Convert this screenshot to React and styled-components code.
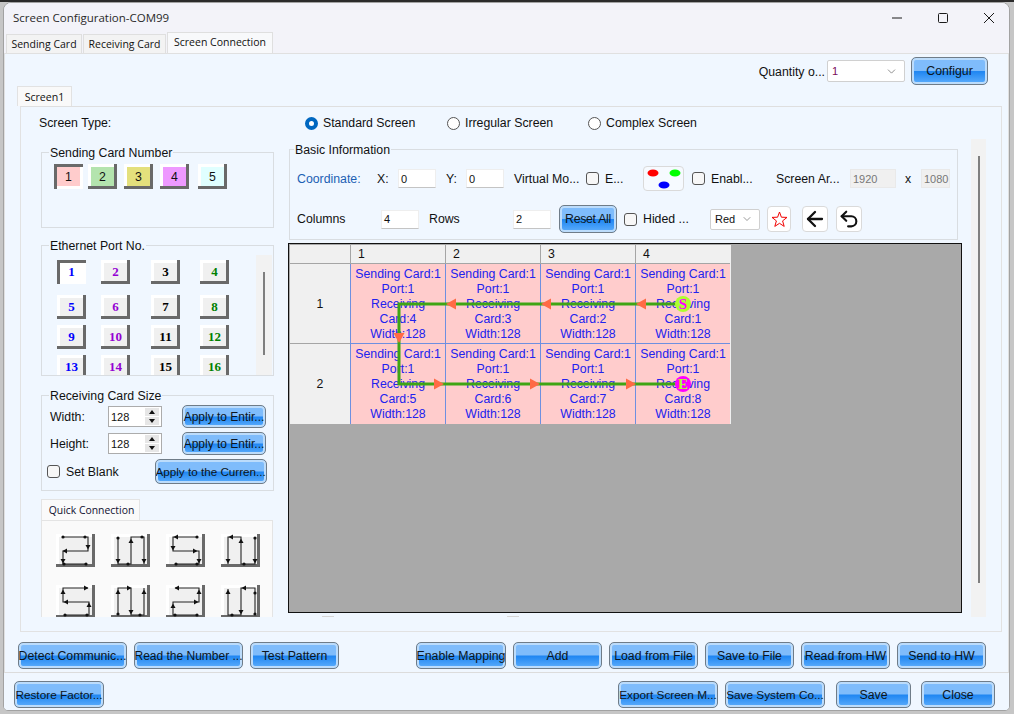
import React from "react";
import styled, { createGlobalStyle } from "styled-components";
import { ArrowLeft, ChevronDown, Undo2 } from "lucide-react";

const Global = createGlobalStyle`
  html, body { margin: 0; padding: 0; }
  body {
    width: 1014px; height: 714px; overflow: hidden;
    background: linear-gradient(#2b2b2b 2px, #c6c6c6 2px);
    font-family: "Liberation Sans", Arial, sans-serif;
    font-size: 12.3px; color: #111;
  }
  * { box-sizing: border-box; }
`;

const Window = styled.div`
  margin: 2px 0 0 3px; width: 1007px; height: 709px;
  display: flex; flex-direction: column;
  background: #f0f7ff; border: 1px solid #a2a2a2; border-radius: 8px 8px 5px 5px; overflow: hidden;
`;
const TitleBar = styled.div`
  height: 29px; flex: none; display: flex; align-items: center; padding-left: 9px; padding-right: 2px;
  background: #f3f3f9; font-family: "Open Sans", sans-serif; font-size: 11.5px; color: #2a2a2a;
`;
const TitleText = styled.span`flex: 1;`;
const WinButton = styled.svg`
  width: 46px; height: 12px; flex: none; fill: none; stroke: #1b1b1b; stroke-width: 1;
`;
const TabStrip = styled.div`
  height: 21px; flex: none; display: flex; align-items: flex-end; padding-left: 2px;
  background: #f3f3f9;
`;
const MainTab = styled.div`
  height: ${p => (p.$active ? 21 : 19)}px; width: ${p => p.$w}px; margin-right: 1px;
  display: flex; align-items: center; justify-content: center;
  font-size: 10.5px; font-family: "Open Sans", sans-serif;
  background: ${p => (p.$active ? "#f8f9fb" : "#f3f3f3")};
  border: 1px solid #dfdfdf; border-bottom: none;
  padding-bottom: ${p => (p.$active ? 3 : 0)}px;
`;
const Pane = styled.div`
  flex: 1; min-height: 0; padding: 3px 0 0 0;
  border: 1px solid #e0e0e0; border-bottom-color: #dcdcdc;
  display: flex; flex-direction: column; background: #f0f7ff;
`;
const TopRow = styled.div`
  height: 28px; flex: none; display: flex; align-items: center; justify-content: flex-end;
  padding-right: 20px;
`;
const QtyLabel = styled.span`margin: 2px 2px 0 0;`;
const SelectBox = styled.div`
  width: ${p => p.$w}px; height: ${p => p.$h}px; display: flex; align-items: center;
  justify-content: space-between; padding: 0 6px 0 4px; background: #fff;
  border: 1px solid #d0d0d0; border-radius: 2px; font-size: ${p => p.$fs || 11}px; color: ${p => p.$c || "#111"};
`;
const InnerTab = styled.div`
  width: 55px; height: 20px; margin: 1px 0 0 12px; flex: none; display: flex; align-items: center;
  justify-content: center; background: #f9f9f9; border: 1px solid #e2e2e2; border-bottom: none;
  font-size: 10.6px; font-family: "Open Sans", sans-serif;
`;
const InnerPane = styled.div`
  height: 526px; flex: none; margin: 0 6px 0 15px; border: 1px solid #e2e2e2; border-top-color: #dfdfdf;
`;
const TypeRow = styled.div`
  height: 32px; display: grid; grid-template-columns: 266px 142px 141px auto; align-items: center;
  padding-left: 18px;
`;
const RadioLabel = styled.label`display: flex; align-items: center; gap: 5px;`;
const Radio = styled.span`
  width: 13px; height: 13px; border-radius: 50%; background: #fff;
  border: ${p => (p.$on ? "4px solid #0067c0" : "1px solid #555")};
`;
const BodyRow = styled.div`height: 478px; display: flex; padding-left: 20px;`;
const LeftCol = styled.div`width: 233px; flex: none; padding-top: 13px;`;
const Group = styled.div`
  position: relative; height: ${p => p.$h}px; margin-top: ${p => p.$mt || 0}px;
  border: 1px solid #d9dde1;
`;
const Legend = styled.span`
  position: absolute; top: -7px; left: ${p => p.$l}px; padding: 0 1px; background: #f0f7ff;
  line-height: 14px; white-space: nowrap;
`;
const CardRow = styled.div`display: flex; padding: 11px 0 0 12px;`;
const Bevel = styled.div`
  flex: none; display: flex; align-items: center; justify-content: center; padding: 3px;
  width: ${p => p.$w || 29}px; height: ${p => p.$h || 25}px; margin-left: ${p => p.$ml || 0}px;
  background: ${p => p.$bg};
  box-shadow: ${p => (p.$in
    ? "inset 3px 3px 0 #696969, inset -3px -3px 0 #fff"
    : "inset -3px -3px 0 #696969, inset 3px 3px 0 #fff")};
`;
const PortView = styled.div`height: 129px; overflow: hidden; display: flex;`;
const PortGrid = styled.div`
  display: grid; grid-template-columns: 44px 50px 49px 29px; grid-template-rows: 24px 24px 24px 24px;
  row-gap: 0; padding: 14px 0 0 15px; width: 214px; flex: none; align-content: start;
  & > *:nth-child(n+5) { margin-top: 11px; }
  & > *:nth-child(n+9) { margin-top: 17px; }
  & > *:nth-child(n+13) { margin-top: 23px; }
`;
const PortNum = styled.span`
  font-family: "Liberation Serif", serif; font-weight: 700; font-size: 13px; color: ${p => p.$c};
`;
const ScrollTrack = styled.div`
  flex: none; width: ${p => p.$w}px; height: ${p => p.$h}px; margin: ${p => p.$m || 0};
  padding: ${p => p.$tp}px 0 0 ${p => p.$lp}px; background: #f2f2f2;
`;
const ScrollThumb = styled.div`width: 2px; height: ${p => p.$h}px; background: #7f7f7f;`;
const FormRow = styled.div`
  display: flex; align-items: center; padding-left: ${p => p.$pl}px; margin-top: ${p => p.$mt}px;
`;
const FormLabel = styled.span`width: 58px; flex: none;`;
const Spinner = styled.div`
  width: 54px; height: 21px; display: flex; align-items: center; justify-content: space-between;
  padding: 0 2px 0 2px; background: #fff; border: 1px solid #acacac; font-size: 11px;
`;
const SpinArrows = styled.div`display: flex; flex-direction: column; gap: 1px;`;
const SpinArrow = styled.div`
  width: 14px; height: 8px; background: #e6e6e6; display: flex; align-items: center; justify-content: center;
  &::before {
    content: ""; border-left: 3px solid transparent; border-right: 3px solid transparent;
    ${p => (p.$up ? "border-bottom: 4px solid #111;" : "border-top: 4px solid #111;")}
  }
`;
const Btn = styled.div`
  flex: none; width: ${p => p.$w}px; height: ${p => p.$h || 27}px; margin-left: ${p => p.$ml || 0}px;
  display: flex; align-items: center; justify-content: center; overflow: hidden; white-space: nowrap;
  border: 1px solid #6f7c88; border-radius: 5px; color: #0c1520;
  background: linear-gradient(#7fbcfb 0, #7fbcfb 48%, #1f86f2 52%, #5eaefc 100%);
  box-shadow: inset 0 0 0 2px #bcdcfb;
  font-size: ${p => p.$fs || 12.3}px; letter-spacing: ${p => p.$ls || 0}px;
`;
const Check = styled.span`
  width: 13px; height: 13px; flex: none; border: 1px solid #555; border-radius: 3px; background: #f7f7f7;
`;
const CheckText = styled.span`margin-left: 6px;`;
const QuickTab = styled.div`
  width: 99px; height: 21px; margin-top: 8px; display: flex; align-items: center; justify-content: center;
  background: #fafafa; border: 1px solid #e4e4e4; border-bottom: none; font-size: 10.4px;
  font-family: "Open Sans", sans-serif; color: #101030; padding-left: 2px;
`;
const QuickPane = styled.div`
  width: 232px; height: 97px; overflow: hidden; padding: 13px 0 0 14px; background: #fafafa;
  border: 1px solid #e4e4e4; border-bottom: none;
  display: grid; grid-template-columns: repeat(4, 39px); column-gap: 16px; row-gap: 18px; align-content: start;
`;
const QuickIcon = styled.div`
  width: 39px; height: 33px; background: #f0f0f0;
  box-shadow: inset -3px -3px 0 #696969, inset 3px 3px 0 #fff;
`;
const QuickSvg = styled.svg`display: block; width: 39px; height: 33px; overflow: visible;`;
const RightCol = styled.div`width: 674px; flex: none; margin-left: 14px; padding-top: 10px;`;
const BasicGroup = styled(Group)`margin-left: 1px; width: 669px; padding-top: 16px;`;
const BasicRow = styled.div`
  display: grid; grid-template-columns: ${p => p.$cols}; height: ${p => p.$h}px; margin-top: ${p => p.$mt || 0}px;
  align-items: center; padding-left: 7px; white-space: nowrap;
`;
const BlueLabel = styled.span`color: #1c5fb4;`;
const TextInput = styled.div`
  width: ${p => p.$w || 38}px; height: 19px; display: flex; align-items: center; padding-left: 2px; font-size: 11px;
  background: ${p => (p.$off ? "#f0f0f0" : "#fff")}; color: ${p => (p.$off ? "#777" : "#111")};
  border: 1px solid ${p => (p.$off ? "#e9e9e9" : "#eeeeee")}; border-bottom-color: ${p => (p.$off ? "#e9e9e9" : "#c4c4c4")};
`;
const IconBtn = styled.div`
  width: ${p => p.$w}px; height: ${p => p.$h}px; display: flex; align-items: center; justify-content: center;
  background: ${p => p.$bg || "#fff"}; border: 1px solid #dadada; border-radius: 4px;
`;
const ColorDots = styled.svg`width: 39px; height: 23px;`;
const StarIcon = styled.svg`width: 17px; height: 17px; fill: none; stroke: #f00000; stroke-width: 1;`;
const ScreenBox = styled.div`
  position: relative; width: 674px; height: 370px; margin-top: 3px;
  background: #a9a9a9; border: 1px solid #111; overflow: hidden;
`;
const ScreenGrid = styled.div`
  display: grid; width: 441px; margin-top: 1px; margin-left: 1px;
  grid-template-columns: 60px repeat(4, 95px); grid-template-rows: 19px 80px 80px; background: #f0f0f0;
`;
const HeadCell = styled.div`
  position: relative; padding: 1px 0 0 7px; line-height: 17px; background: #f0f0f0;
  border-bottom: 1px solid #a5a5a5; border-left: ${p => (p.$first ? "none" : "1px solid #a5a5a5")};
`;
const RowHead = styled.div`
  display: flex; align-items: center; justify-content: center; background: #f0f0f0;
  border-bottom: ${p => (p.$last ? "none" : "1px solid #a5a5a5")}; padding-right: 0;
`;
const Cell = styled.div`
  display: flex; flex-direction: column; align-items: center; padding-top: 3px; background: #ffcccc;
  color: #2222ee; line-height: 15px; font-size: 12.3px; white-space: nowrap;
  border-left: 1px solid #6e8fe0; border-bottom: ${p => (p.$last ? "none" : "1px solid #6e8fe0")};
`;
const PathLayer = styled.svg`position: absolute; left: 0; top: 0; width: 672px; height: 368px; pointer-events: none;`;
const Marker = styled.span`
  position: absolute; left: ${p => p.$x - 8}px; top: ${p => p.$y - 8}px; width: 16px; height: 16px; border-radius: 50%;
  display: flex; align-items: center; justify-content: center; background: ${p => p.$bg}; color: ${p => p.$c};
  font-family: "Liberation Serif", serif; font-weight: 700; font-size: 15px; line-height: 16px;
`;
const BumpRow = styled.div`display: flex; padding: 3px 0 0 34px;`;
const Bump = styled.div`width: 12px; height: 1px; background: #d6d6d6; margin-right: 173px;`;
const MainScroll = styled(ScrollTrack)``;
const ActionRow = styled.div`
  flex: none; display: flex; gap: 7px; margin-top: 10px; padding: 0 22px 0 13px;
`;
const Push = styled.div`flex: 1;`;
const Footer = styled.div`
  flex: none; height: 37px; display: flex; align-items: flex-start; padding: 8px 14px 0 10px; gap: 7px;
  background: #f0f7ff;
`;

const cardColors = [
  ["1", "#ffcccc", true, 0], ["2", "#b4e4ae", false, 5], ["3", "#e4e07c", false, 7],
  ["4", "#ee99ff", false, 7], ["5", "#e0ffff", false, 9],
];
const portColor = ["#0000ff", "#9400d3", "#000", "#008000"];

const a = (x, y, d) => {
  const pts = {
    d: `${x - 2.5},${y - 2} ${x + 2.5},${y - 2} ${x},${y + 2.5}`,
    u: `${x - 2.5},${y + 2} ${x + 2.5},${y + 2} ${x},${y - 2.5}`,
    l: `${x + 2},${y - 2.5} ${x + 2},${y + 2.5} ${x - 2.5},${y}`,
    r: `${x - 2},${y - 2.5} ${x - 2},${y + 2.5} ${x + 2.5},${y}`,
  };
  return pts[d];
};
const icons = [
  { p: "7,3 32,3 32,17 7,17 7,30 30,30", dots: [[7, 3], [29, 3], [8, 30], [30, 30]], arr: [[32, 13, "d"], [9, 17, "l"], [7, 27, "d"]] },
  { p: "7,4 7,30 20,30 20,3 33,3 33,30", dots: [[7, 4], [17, 30], [31, 3]], arr: [[7, 27, "d"], [20, 7, "u"], [33, 27, "d"]] },
  { p: "31,3 7,3 7,17 33,17 33,30 10,30", dots: [[31, 3], [31, 30], [10, 30]], arr: [[10, 3, "l"], [7, 14, "d"], [29, 17, "r"], [33, 27, "d"]] },
  { p: "34,4 34,30 20,30 20,3 7,3 7,30", dots: [[34, 4], [23, 30]], arr: [[34, 27, "d"], [20, 7, "u"], [10, 3, "l"], [7, 27, "d"]] },
  { p: "9,30 33,30 33,17 7,17 7,3 32,3", dots: [[9, 30], [31, 30]], arr: [[33, 20, "u"], [10, 17, "l"], [7, 7, "u"], [30, 3, "r"]] },
  { p: "7,29 7,3 20,3 20,30 33,30 33,3", dots: [[7, 29], [29, 30]], arr: [[7, 7, "u"], [18, 3, "r"], [20, 27, "d"], [33, 7, "u"]] },
  { p: "31,30 7,30 7,17 33,17 33,3 9,3", dots: [[31, 30], [9, 30]], arr: [[7, 21, "u"], [30, 17, "r"], [33, 7, "u"], [11, 3, "l"]] },
  { p: "34,30 34,3 20,3 20,30 7,30 7,4", dots: [[34, 8], [34, 29], [11, 30]], arr: [[7, 7, "u"], [20, 27, "d"], [23, 3, "l"]] },
];

const cardsRow1 = [4, 3, 2, 1];
const cardsRow2 = [5, 6, 7, 8];

function CardCell({ n, last }) {
  return (
    <Cell $last={last}>
      <span>Sending Card:1</span><span>Port:1</span><span>Receiving</span>
      <span>Card:{n}</span><span>Width:128</span>
    </Cell>
  );
}

export default function App() {
  return (
    <>
      <Global />
      <Window>
        <TitleBar>
          <TitleText>Screen Configuration-COM99</TitleText>
          <WinButton viewBox="0 0 46 12"><path d="M23 6h10" /></WinButton>
          <WinButton viewBox="0 0 46 12"><rect x="23.5" y="1.5" width="9" height="9" rx="1" /></WinButton>
          <WinButton viewBox="0 0 46 12"><path d="M23 1l10 10M33 1L23 11" /></WinButton>
        </TitleBar>
        <TabStrip>
          <MainTab $w={76}>Sending Card</MainTab>
          <MainTab $w={83}>Receiving Card</MainTab>
          <MainTab $w={106} $active>Screen Connection</MainTab>
        </TabStrip>
        <Pane>
          <TopRow>
            <QtyLabel>Quantity o...</QtyLabel>
            <SelectBox $w={78} $h={22} $c="#7a0a5a">1<ChevronDown size={13} strokeWidth={1.2} color="#555" /></SelectBox>
            <Btn $w={77} $h={28} $ml={6}>Configur</Btn>
          </TopRow>
          <InnerTab>Screen1</InnerTab>
          <InnerPane>
            <TypeRow>
              <span>Screen Type:</span>
              <RadioLabel><Radio $on />Standard Screen</RadioLabel>
              <RadioLabel><Radio />Irregular Screen</RadioLabel>
              <RadioLabel><Radio />Complex Screen</RadioLabel>
            </TypeRow>
            <BodyRow>
              <LeftCol>
                <Group $h={76}>
                  <Legend $l={7}>Sending Card Number</Legend>
                  <CardRow>
                    {cardColors.map(([n, bg, sel, ml]) => (
                      <Bevel key={n} $bg={bg} $in={sel} $ml={ml}>{n}</Bevel>
                    ))}
                  </CardRow>
                </Group>
                <Group $h={131} $mt={17}>
                  <Legend $l={7}>Ethernet Port No.</Legend>
                  <PortView>
                    <PortGrid>
                      {Array.from({ length: 16 }, (_, i) => (
                        <Bevel key={i} $h={24} $bg={i === 0 ? "#fff" : "#f0f0f0"} $in={i === 0}>
                          <PortNum $c={portColor[i % 4]}>{i + 1}</PortNum>
                        </Bevel>
                      ))}
                    </PortGrid>
                    <ScrollTrack $w={16} $h={120} $m="9px 0 0 0" $tp={17} $lp={7}>
                      <ScrollThumb $h={83} />
                    </ScrollTrack>
                  </PortView>
                </Group>
                <Group $h={96} $mt={19}>
                  <Legend $l={7}>Receiving Card Size</Legend>
                  <FormRow $pl={8} $mt={9}>
                    <FormLabel>Width:</FormLabel>
                    <Spinner>128<SpinArrows><SpinArrow $up /><SpinArrow /></SpinArrows></Spinner>
                    <Btn $w={84} $h={23} $ml={20} $fs={12}>Apply to Entir...</Btn>
                  </FormRow>
                  <FormRow $pl={8} $mt={4}>
                    <FormLabel>Height:</FormLabel>
                    <Spinner>128<SpinArrows><SpinArrow $up /><SpinArrow /></SpinArrows></Spinner>
                    <Btn $w={84} $h={23} $ml={20} $fs={12}>Apply to Entir...</Btn>
                  </FormRow>
                  <FormRow $pl={5} $mt={4}>
                    <Check /><CheckText>Set Blank</CheckText>
                    <Btn $w={112} $h={25} $ml={36} $fs={11.7}>Apply to the Curren...</Btn>
                  </FormRow>
                </Group>
                <QuickTab>Quick Connection</QuickTab>
                <QuickPane>
                  {icons.map((ic, i) => (
                    <QuickIcon key={i}>
                      <QuickSvg viewBox="0 0 39 33">
                        <polyline points={ic.p} fill="none" stroke="#222" strokeWidth="1.1" />
                        {ic.dots.map(([x, y], j) => <circle key={j} cx={x} cy={y} r="1.6" fill="#111" />)}
                        {ic.arr.map(([x, y, d], j) => <polygon key={j} points={a(x, y, d)} fill="#111" />)}
                      </QuickSvg>
                    </QuickIcon>
                  ))}
                </QuickPane>
              </LeftCol>
              <RightCol>
                <BasicGroup $h={91}>
                  <Legend $l={4}>Basic Information</Legend>
                  <BasicRow $h={25} $cols="80px 21px 48px 20px 48px 72px 19px 38px 49px 19px 65px 74px 55px 16px 28px">
                    <BlueLabel>Coordinate:</BlueLabel>
                    <span>X:</span>
                    <TextInput>0</TextInput>
                    <span>Y:</span>
                    <TextInput>0</TextInput>
                    <span>Virtual Mo...</span>
                    <Check />
                    <span>E...</span>
                    <IconBtn $w={41} $h={25} $bg="#f6faff">
                      <ColorDots viewBox="0 0 39 23">
                        <ellipse cx="9" cy="6" rx="5.5" ry="3.5" fill="#ff0000" />
                        <ellipse cx="31" cy="6" rx="5.5" ry="3.5" fill="#00ff00" />
                        <ellipse cx="20" cy="18" rx="5.5" ry="3.5" fill="#0000ff" />
                      </ColorDots>
                    </IconBtn>
                    <Check />
                    <span>Enabl...</span>
                    <span>Screen Ar...</span>
                    <TextInput $w={46} $off>1920</TextInput>
                    <span>x</span>
                    <TextInput $w={29} $off>1080</TextInput>
                  </BasicRow>
                  <BasicRow $h={28} $mt={14} $cols="84px 48px 84px 46px 65px 19px 67px 57px 35px 34px 26px">
                    <span>Columns</span>
                    <TextInput>4</TextInput>
                    <span>Rows</span>
                    <TextInput>2</TextInput>
                    <Btn $w={58} $h={28} $ls={-0.3}>Reset All</Btn>
                    <Check />
                    <span>Hided ...</span>
                    <SelectBox $w={50} $h={21}>Red<ChevronDown size={12} strokeWidth={1.2} color="#555" /></SelectBox>
                    <IconBtn $w={24} $h={26}>
                      <StarIcon viewBox="0 0 17 17">
                        <polygon points="8.5,1 10.4,6.2 16,6.4 11.6,9.9 13.2,15.4 8.5,12.3 3.8,15.4 5.4,9.9 1,6.4 6.6,6.2" />
                      </StarIcon>
                    </IconBtn>
                    <IconBtn $w={26} $h={26}><ArrowLeft size={24} color="#111" strokeWidth={2.3} /></IconBtn>
                    <IconBtn $w={26} $h={26}><Undo2 size={22} color="#111" strokeWidth={2.3} /></IconBtn>
                  </BasicRow>
                </BasicGroup>
                <ScreenBox>
                  <ScreenGrid>
                    <HeadCell $first />
                    {[1, 2, 3, 4].map(n => <HeadCell key={n}>{n}</HeadCell>)}
                    <RowHead>1</RowHead>
                    {cardsRow1.map(n => <CardCell key={n} n={n} />)}
                    <RowHead $last>2</RowHead>
                    {cardsRow2.map(n => <CardCell key={n} n={n} last />)}
                  </ScreenGrid>
                  <PathLayer viewBox="0 0 672 368">
                    <polyline points="395,60 110,60 110,140 395,140" fill="none" stroke="#3fa514" strokeWidth="3" />
                    <g fill="#ff6a45">
                      <polygon points="347,60 357,54.5 357,65.5" />
                      <polygon points="252,60 262,54.5 262,65.5" />
                      <polygon points="157,60 167,54.5 167,65.5" />
                      <polygon points="104.5,89 115.5,89 110,99" />
                      <polygon points="145,134.5 145,145.5 155,140" />
                      <polygon points="241,134.5 241,145.5 251,140" />
                      <polygon points="337,134.5 337,145.5 347,140" />
                    </g>
                  </PathLayer>
                  <Marker $x={394} $y={60} $bg="#adff2f" $c="#ff00ff">S</Marker>
                  <Marker $x={394} $y={140} $bg="#ff00ff" $c="#adff2f">E</Marker>
                </ScreenBox>
                <BumpRow><Bump /><Bump /></BumpRow>
              </RightCol>
              <MainScroll $w={15} $h={478} $m="0 0 0 9px" $tp={17} $lp={7}>
                <ScrollThumb $h={427} />
              </MainScroll>
            </BodyRow>
          </InnerPane>
          <ActionRow>
            <Btn $w={109}>Detect Communic...</Btn>
            <Btn $w={109} $fs={12}>Read the Number ...</Btn>
            <Btn $w={89}>Test Pattern</Btn>
            <Push />
            <Btn $w={90}>Enable Mapping</Btn>
            <Btn $w={89}>Add</Btn>
            <Btn $w={89}>Load from File</Btn>
            <Btn $w={89}>Save to File</Btn>
            <Btn $w={89}>Read from HW</Btn>
            <Btn $w={89}>Send to HW</Btn>
          </ActionRow>
        </Pane>
        <Footer>
          <Btn $w={90} $fs={11.8}>Restore Factor...</Btn>
          <Push />
          <Btn $w={100} $fs={11.8}>Export Screen M...</Btn>
          <Btn $w={100} $fs={11.8}>Save System Co...</Btn>
          <Btn $w={75} $ml={4}>Save</Btn>
          <Btn $w={74} $ml={3}>Close</Btn>
        </Footer>
      </Window>
    </>
  );
}
